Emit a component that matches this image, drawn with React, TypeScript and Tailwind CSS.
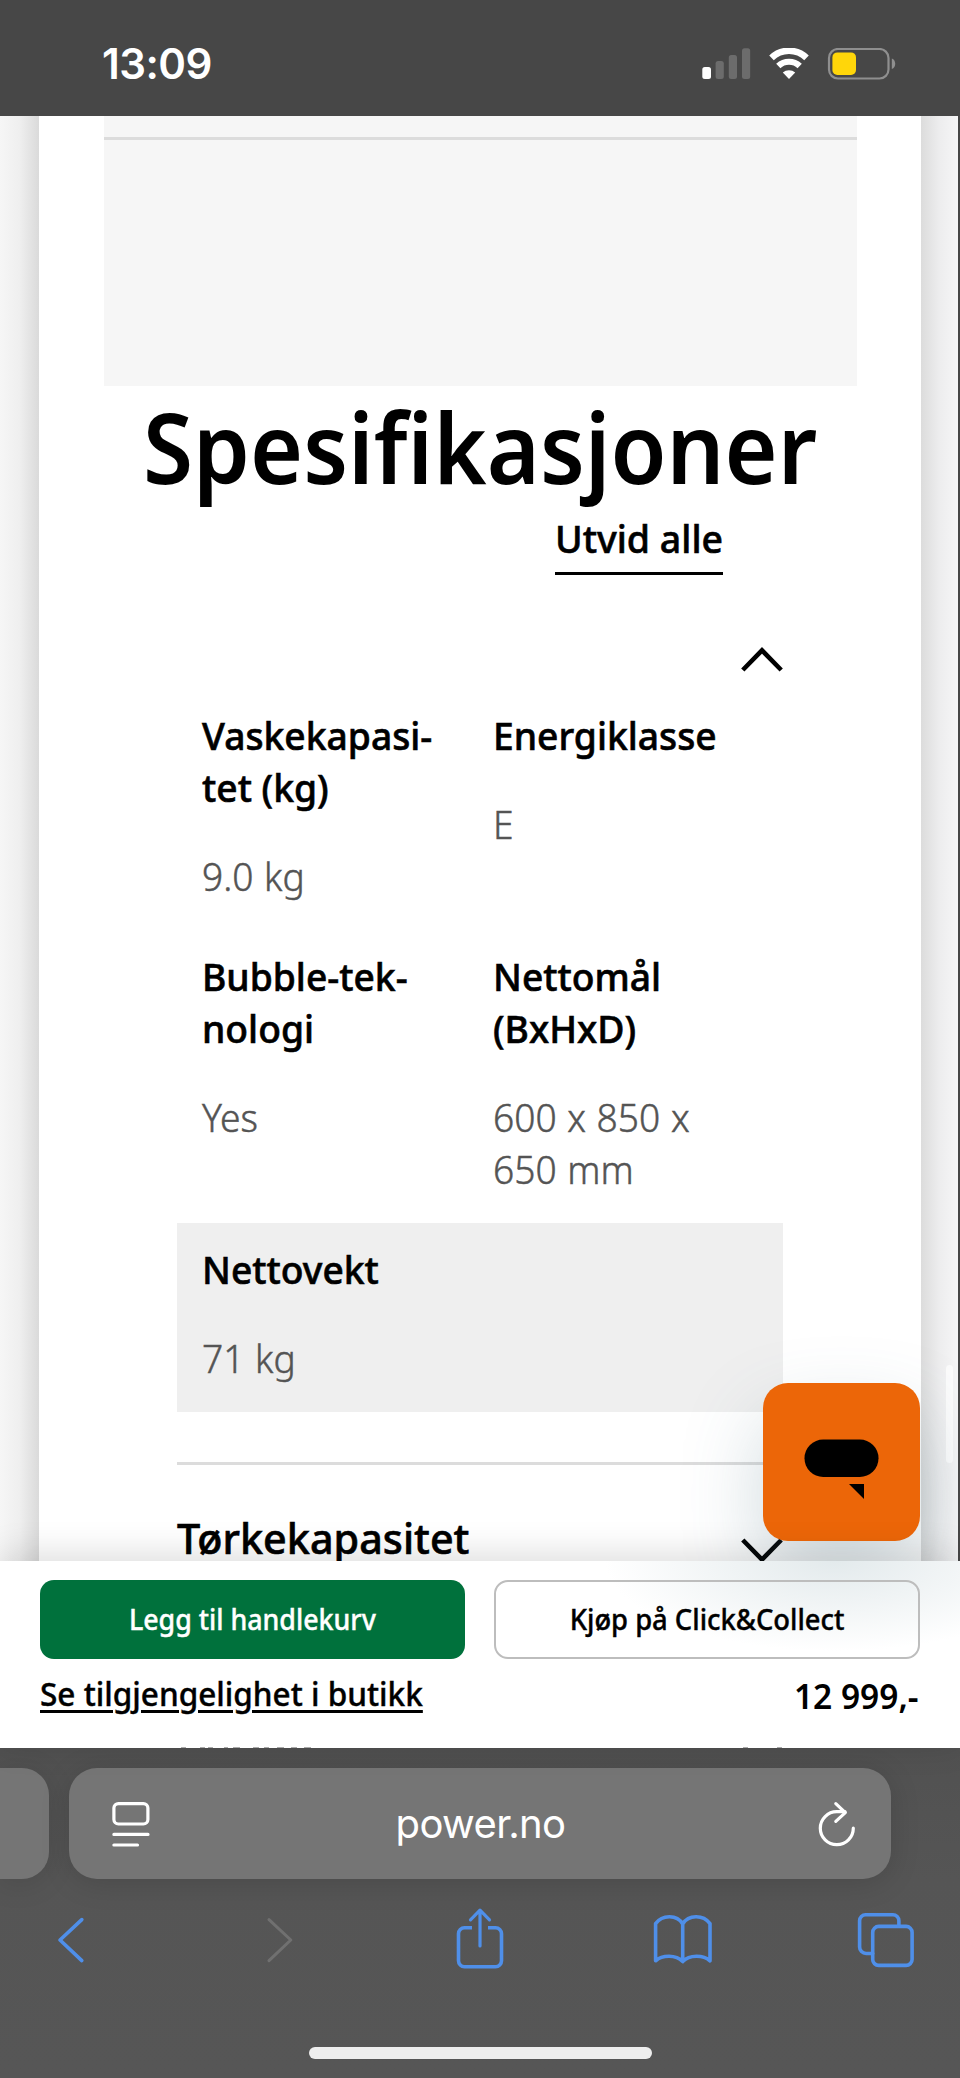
import type { ReactNode } from 'react';

interface Spec {
    label: ReactNode;
    value: ReactNode;
    highlighted?: boolean;
}

const specs: Spec[] = [
    { label: <>Vaskekapasi-<br />tet (kg)</>, value: '9.0 kg' },
    { label: 'Energiklasse', value: 'E' },
    { label: <>Bubble-tek-<br />nologi</>, value: 'Yes' },
    { label: <>Nettomål<br />(BxHxD)</>, value: <>600 x 850 x<br />650 mm</> },
    { label: 'Nettovekt', value: '71 kg', highlighted: true },
];

function StatusBar() {
    return (
        <header className="flex h-[116px] shrink-0 items-center justify-between bg-[#474747] pt-[12px] pr-[64px] pl-[102px] font-['Inter',sans-serif] text-white">
            <span className="text-[42px] leading-none font-semibold tracking-[-0.5px]">13:09</span>
            <svg width="194" height="32" viewBox="702 48 194 32" fill="none">
                {/* signal */}
                <rect x="702.3" y="67" width="8.7" height="12" rx="2.5" fill="#fff" />
                <rect x="715.6" y="61" width="8.2" height="18" rx="2.5" fill="#6c6c6c" />
                <rect x="728.8" y="55" width="8.2" height="24" rx="2.5" fill="#6c6c6c" />
                <rect x="742" y="48.3" width="8.2" height="30.7" rx="2.5" fill="#6c6c6c" />

                {/* wifi */}
                <path d="M771.5 57.8a25.4 25.4 0 0 1 35 0" stroke="#fff" strokeWidth="6.6" />
                <path d="M778.3 66a15.6 15.6 0 0 1 21.4 0" stroke="#fff" strokeWidth="6.2" />
                <path d="M789 79l-6.2-6.4a9.3 9.3 0 0 1 12.4 0z" fill="#fff" />

                {/* battery */}
                <rect x="829" y="49" width="59.5" height="29.5" rx="9" stroke="#8f8f8f" strokeWidth="2.2" />
                <rect x="832.4" y="52.4" width="23.6" height="22.6" rx="5" fill="#ffd60a" />
                <path d="M891.8 58.5c4.6 1.6 4.6 9 0 10.6z" fill="#8f8f8f" />
            </svg>
        </header>
    );
}

function Chevron({ down }: { down?: boolean }) {
    return (
        <svg width="42" height="25" viewBox="0 0 42 25" fill="none" className={down ? 'rotate-180' : ''}>
            <path d="M1.8 23L21 3.4 40.2 23" stroke="#000" strokeWidth="4.6" />
        </svg>
    );
}

function SpecCell({ label, value, highlighted }: Spec) {
    return (
        <div
            className={`pt-5 pb-[28px] pl-[25px] text-[38.5px] leading-[52px] ${highlighted ? 'col-span-2 bg-[#efefef]' : ''}`}
        >
            <h3 className="origin-left scale-x-[0.967] font-medium whitespace-nowrap text-black [-webkit-text-stroke:0.6px]">{label}</h3>
            <p className="mt-[37px] origin-left scale-x-[0.965] font-light whitespace-nowrap text-[#545454] [-webkit-text-stroke:0.5px] [word-spacing:1px]">
                {value}
            </p>
        </div>
    );
}

function ChatButton() {
    return (
        <button className="absolute top-[1267px] left-[763px] h-[158px] w-[157px] rounded-[25px] bg-[#ec6608] shadow-[0_36px_80px_rgba(70,110,125,0.26)]">
            <svg width="157" height="158" viewBox="763 1383 157 158">
                <rect x="804.5" y="1439.5" width="74" height="37.5" rx="18.7" />
                <path d="M849 1484h15v15z" />
            </svg>
        </button>
    );
}

function ProductPage() {
    return (
        <main className="relative h-[1445px] shrink-0 overflow-hidden border-r-2 border-[#474747] bg-[#f6f6f7]">
            <div className="flex h-full">
                <div className="w-[39px] bg-linear-to-r from-[#f6f6f6] via-[#efefef] to-[#dadada]" />

                <div className="h-full w-[882px] bg-white pr-[64px] pl-[65px]">
                    <div className="h-6 border-b-[3px] border-[#dcdcdc] bg-[#f6f6f6]" />
                    <div className="h-[246px] bg-[#f6f6f6]" />

                    <h2 className="mt-[6px] ml-[39px] h-[133px] origin-left scale-x-[0.928] text-[98px] leading-[108px] font-semibold whitespace-nowrap text-black">
                        Spesifikasjoner
                    </h2>

                    <div className="mr-[134px] flex justify-end">
                        <a className="mt-[-13px] flex h-[63px] w-[168px] border-b-[3px] border-black text-[38px] leading-[52px] font-medium whitespace-nowrap text-black [-webkit-text-stroke:0.6px]">
                            <span className="origin-left scale-x-[0.986]">Utvid alle</span>
                        </a>
                    </div>

                    <div className="mt-[72px] mr-[74px] ml-[73px]">
                        <div className="flex justify-end">
                            <Chevron />
                        </div>
                        <div className="mt-[17px] grid grid-cols-[291px_1fr]">
                            {specs.map((spec, i) => (
                                <SpecCell key={i} {...spec} />
                            ))}
                        </div>

                        <div className="mt-[50px] flex justify-between border-t-[3px] border-[#dcdcdc] pt-[43px]">
                            <h3 className="origin-left scale-x-[0.984] text-[42px] leading-[60px] font-medium text-black [-webkit-text-stroke:0.6px]">
                                Tørkekapasitet
                            </h3>
                            <span className="mt-[30px]">
                                <Chevron down />
                            </span>
                        </div>
                    </div>
                </div>

                <div className="flex-1 bg-linear-to-r from-[#dcdcdc] via-[#ededee] to-[#f6f6f7]" />
            </div>

            {/* scroll indicator */}
            <div className="absolute top-[1249px] left-[946px] h-[98px] w-[7px] rounded-full bg-white/70" />

            <ChatButton />
        </main>
    );
}

function BuyBar() {
    return (
        <section className="relative flex h-[187px] shrink-0 flex-col bg-white bg-[radial-gradient(ellipse_230px_90px_at_835px_0px,#e3eaec,#fff)] pt-[19px] text-black shadow-[0_-6px_34px_rgba(0,0,0,0.14)]">
            <div className="flex gap-[29px] px-10 text-[28.5px] font-medium [-webkit-text-stroke:0.4px]">
                <button className="h-[79px] w-[425px] rounded-[14px] bg-[#00713c] text-white">
                    <span className="inline-block scale-x-[0.94] whitespace-nowrap">Legg til handlekurv</span>
                </button>
                <button className="h-[79px] w-[426px] rounded-[14px] border-2 border-[#bdbdbd]">
                    <span className="inline-block scale-x-[0.96] whitespace-nowrap">Kjøp på Click&amp;Collect</span>
                </button>
            </div>
            <div className="mt-[12px] flex justify-between px-10 font-medium">
                <a className="origin-left scale-x-[0.97] text-[32.5px] leading-[46px] underline decoration-[2.5px] underline-offset-[4px] [-webkit-text-stroke:0.4px]">
                    Se tilgjengelighet i butikk
                </a>
                <span className="mt-[2px] mr-[2px] origin-right scale-x-[0.985] text-[34px] leading-[46px] font-semibold">12 999,-</span>
            </div>

            {/* top edge of the next accordion row */}
            <svg width="960" height="2" viewBox="0 0 960 2" className="mt-auto" stroke="#aaa" strokeWidth="1">
                <path d="M181 1.5h5M200 1.5h5M208 1.5h5M224 1.5h4M233 1.5h7M253 1.5h6M264 1.5h5M277 1.5h7M291 1.5h6M304 1.5h7M743 1.5h5M777 1.5h5" />
            </svg>
        </section>
    );
}

function BrowserBar() {
    return (
        <footer className="flex flex-1 flex-col bg-linear-to-b from-[#515151] via-[#555] via-40% to-[#565656] pt-5">
            <div className="flex gap-5">
                <div className="h-[111px] w-[49px] rounded-r-[27px] bg-[#757575] shadow-[0_4px_30px_rgba(0,0,0,0.12)]" />
                <div className="flex h-[111px] w-[822px] items-center justify-between rounded-[28px] bg-[#757575] pr-[35px] pl-[43px] shadow-[0_4px_30px_rgba(0,0,0,0.14)]">
                    <svg width="38" height="46" viewBox="0 0 38 46" fill="none" stroke="#fff" strokeWidth="3.2" strokeLinecap="round">
                        <rect x="1.9" y="2.6" width="34" height="20.4" rx="4.5" />
                        <path d="M1.9 33.4H36M1.9 44H25.5" />
                    </svg>
                    <span className="mr-[7px] font-['Inter',sans-serif] text-[40px] leading-none tracking-[-0.6px] text-white">power.no</span>
                    <svg width="38" height="46" viewBox="818 1798 38 46" fill="none" stroke="#fff" strokeWidth="3.2" strokeLinecap="round" strokeLinejoin="round">
                        <path d="M853.3 1825.2A16.5 16.5 0 1 1 836.8 1808.7H845" />
                        <path d="M835.8 1800.6L845.3 1809.6 835.8 1818.4" />
                    </svg>
                </div>
            </div>

            <svg width="960" height="70" viewBox="0 1904 960 70" fill="none" stroke="#4f8fe9" strokeWidth="3.6" strokeLinecap="round" strokeLinejoin="round" className="mt-[25px]">
                {/* back and forward */}
                <path d="M81.8 1919.6L60 1940 81.8 1960.6" />
                <path d="M269 1919.6L290.8 1940 269 1960.6" stroke="#707070" strokeWidth="3" />

                {/* share */}
                <path d="M472 1927.8h-7.5a6 6 0 0 0-6 6v27a6 6 0 0 0 6 6h31a6 6 0 0 0 6-6v-27a6 6 0 0 0-6-6H488" strokeLinecap="butt" />
                <path d="M480 1946V1911M470.5 1919.8L480 1910.2 489.5 1919.8" strokeWidth="3.2" />

                {/* bookmarks */}
                <path d="M682.7 1924C677 1914.6 662.5 1914.4 655.6 1923.6V1960.8C662 1955 676 1954.4 682.7 1961.6 689.5 1954.4 703.5 1955 710 1960.8V1923.6C703 1914.4 688.5 1914.6 682.7 1924ZM682.7 1924V1961" />

                {/* tabs */}
                <rect x="872.7" y="1926.4" width="39.4" height="39" rx="6" />
                <path d="M872.7 1953.5h-6.6a6.5 6.5 0 0 1-6.5-6.5v-26.3a6 6 0 0 1 6-6h27.3a6 6 0 0 1 6 6v5.4" />
            </svg>

            <div className="mt-[73px] ml-[309px] h-3 w-[343px] rounded-full bg-[#eee]" />
        </footer>
    );
}

export default function App() {
    return (
        <div className="flex h-[2078px] w-[960px] flex-col overflow-hidden bg-white font-['Noto_Sans',sans-serif]">
            <StatusBar />
            <ProductPage />
            <BuyBar />
            <BrowserBar />
        </div>
    );
}
